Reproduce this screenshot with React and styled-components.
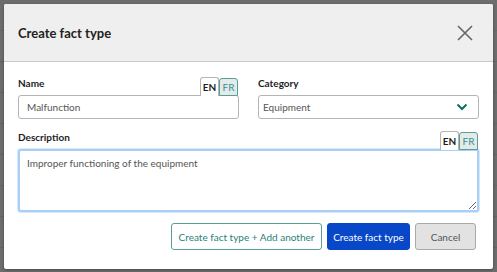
import React from "react";
import styled, { createGlobalStyle } from "styled-components";

const GlobalStyle = createGlobalStyle`
  html, body {
    margin: 0;
    padding: 0;
    background: #6d6d6d;
    font-family: Lato, "Noto Sans", sans-serif;
  }
  * { box-sizing: border-box; }
`;

function LangTabs({ active = "EN" }) {
  return (
    <Tabs>
      <Tab $active={active === "EN"}>EN</Tab>
      <Tab $active={active === "FR"}>FR</Tab>
    </Tabs>
  );
}

export default function App() {
  return (
    <Backdrop>
      <GlobalStyle />
      <Modal>
        <Header>
          <Title>Create fact type</Title>
          <CloseButton aria-label="Close">
            <svg width="16" height="16" viewBox="0 0 16 16">
              <path d="M1 1L15 15M15 1L1 15" stroke="#666" strokeWidth="1.6" fill="none" />
            </svg>
          </CloseButton>
        </Header>
        <Body>
          <Grid>
            <Field>
              <LabelRow>
                <Label>Name</Label>
                <LangTabs />
              </LabelRow>
              <Input defaultValue="Malfunction" />
            </Field>
            <Field>
              <LabelRow>
                <Label>Category</Label>
              </LabelRow>
              <Select>
                <span>Equipment</span>
                <svg width="12" height="8" viewBox="0 0 12 8">
                  <path d="M1.5 1.5L6 6L10.5 1.5" stroke="#0d6e66" strokeWidth="2" fill="none" />
                </svg>
              </Select>
            </Field>
          </Grid>
          <Field>
            <LabelRow>
              <Label>Description</Label>
              <LangTabs />
            </LabelRow>
            <TextArea defaultValue="Improper functioning of the equipment" />
          </Field>
          <Footer>
            <Button $variant="outline">Create fact type + Add another</Button>
            <Button $variant="primary">Create fact type</Button>
            <Button $variant="secondary">Cancel</Button>
          </Footer>
        </Body>
      </Modal>
    </Backdrop>
  );
}

const Backdrop = styled.div`
  width: 497px;
  height: 272px;
  padding: 4px 4px 0 4px;
  background: repeating-linear-gradient(
    180deg,
    #6d6d6d 0,
    #6d6d6d 30px,
    #646464 30px,
    #646464 31px
  );
`;

const Modal = styled.div`
  width: 489px;
  height: 265px;
  background: #fff;
  border-radius: 2px;
  display: flex;
  flex-direction: column;
  box-shadow: 0 1px 3px rgba(0, 0, 0, 0.35);
`;

const Header = styled.div`
  height: 58px;
  background: #efefef;
  border-bottom: 1px solid #c9c9c9;
  display: flex;
  align-items: center;
  justify-content: space-between;
  padding: 0 20px 0 14px;
  border-radius: 2px 2px 0 0;
`;

const Title = styled.h2`
  margin: 0;
  font-size: 13px;
  font-weight: 700;
  color: #222;
  padding-top: 1px;
`;

const CloseButton = styled.button`
  border: none;
  background: none;
  padding: 0;
  width: 16px;
  height: 16px;
  display: flex;
  cursor: pointer;
`;

const Body = styled.div`
  padding: 15px 14px 0 14px;
  display: flex;
  flex-direction: column;
`;

const Grid = styled.div`
  display: grid;
  grid-template-columns: 1fr 1fr;
  column-gap: 19px;
  margin-bottom: 12px;
`;

const Field = styled.div`
  display: flex;
  flex-direction: column;
`;

const LabelRow = styled.div`
  display: flex;
  align-items: flex-end;
  justify-content: space-between;
  height: 18px;
  padding-bottom: 5px;
  position: relative;
`;

const Label = styled.label`
  font-size: 10px;
  font-weight: 700;
  color: #1e1e1e;
  line-height: 13px;
`;

const Tabs = styled.div`
  position: absolute;
  right: 1px;
  bottom: -1px;
  display: flex;
  z-index: 1;
`;

const Tab = styled.span`
  width: 19px;
  display: flex;
  align-items: center;
  justify-content: center;
  font-size: 10px;
  font-weight: ${(p) => (p.$active ? 700 : 400)};
  color: ${(p) => (p.$active ? "#222" : "#3d8f86")};
  background: ${(p) => (p.$active ? "#fff" : "#e2ebea")};
  border: 1px solid ${(p) => (p.$active ? "#b5b5b5" : "#5a9f97")};
  border-bottom: ${(p) => (p.$active ? "none" : "1px solid #5a9f97")};
  border-radius: 3px 3px 0 0;
  height: ${(p) => (p.$active ? "19px" : "18px")};
  align-self: flex-end;
`;

const Input = styled.input`
  height: 24px;
  border: 1px solid #b5b5b5;
  border-radius: 3px;
  padding: 0 8px;
  font-family: inherit;
  font-size: 10px;
  color: #555;
  outline: none;
`;

const Select = styled.div`
  height: 24px;
  border: 1px solid #b5b5b5;
  border-radius: 3px;
  padding: 0 10px 0 4px;
  font-size: 10px;
  color: #555;
  display: flex;
  align-items: center;
  justify-content: space-between;
`;

const TextArea = styled.textarea`
  height: 63px;
  border: 2px solid #a9cff6;
  border-radius: 3px;
  padding: 6px 7px;
  font-family: inherit;
  font-size: 10px;
  color: #555;
  outline: none;
  resize: vertical;
  box-shadow: 0 0 0 1px #d6e8fb;
`;

const Footer = styled.div`
  display: flex;
  justify-content: flex-end;
  gap: 5px;
  margin-top: 11px;
  padding-right: 3px;
`;

const variants = {
  outline: `
    background: #fff;
    color: #2c7f77;
    border: 1px solid #5a9f97;
    width: 151px;
  `,
  primary: `
    background: #0848c8;
    color: #fff;
    border: 1px solid #0848c8;
    width: 83px;
  `,
  secondary: `
    background: #e2e2e2;
    color: #555;
    border: 1px solid #a9a9a9;
    width: 61px;
  `,
};

const Button = styled.button`
  height: 27px;
  border-radius: 3px;
  font-family: inherit;
  font-size: 10px;
  padding: 0;
  white-space: nowrap;
  cursor: pointer;
  ${(p) => variants[p.$variant]}
`;
